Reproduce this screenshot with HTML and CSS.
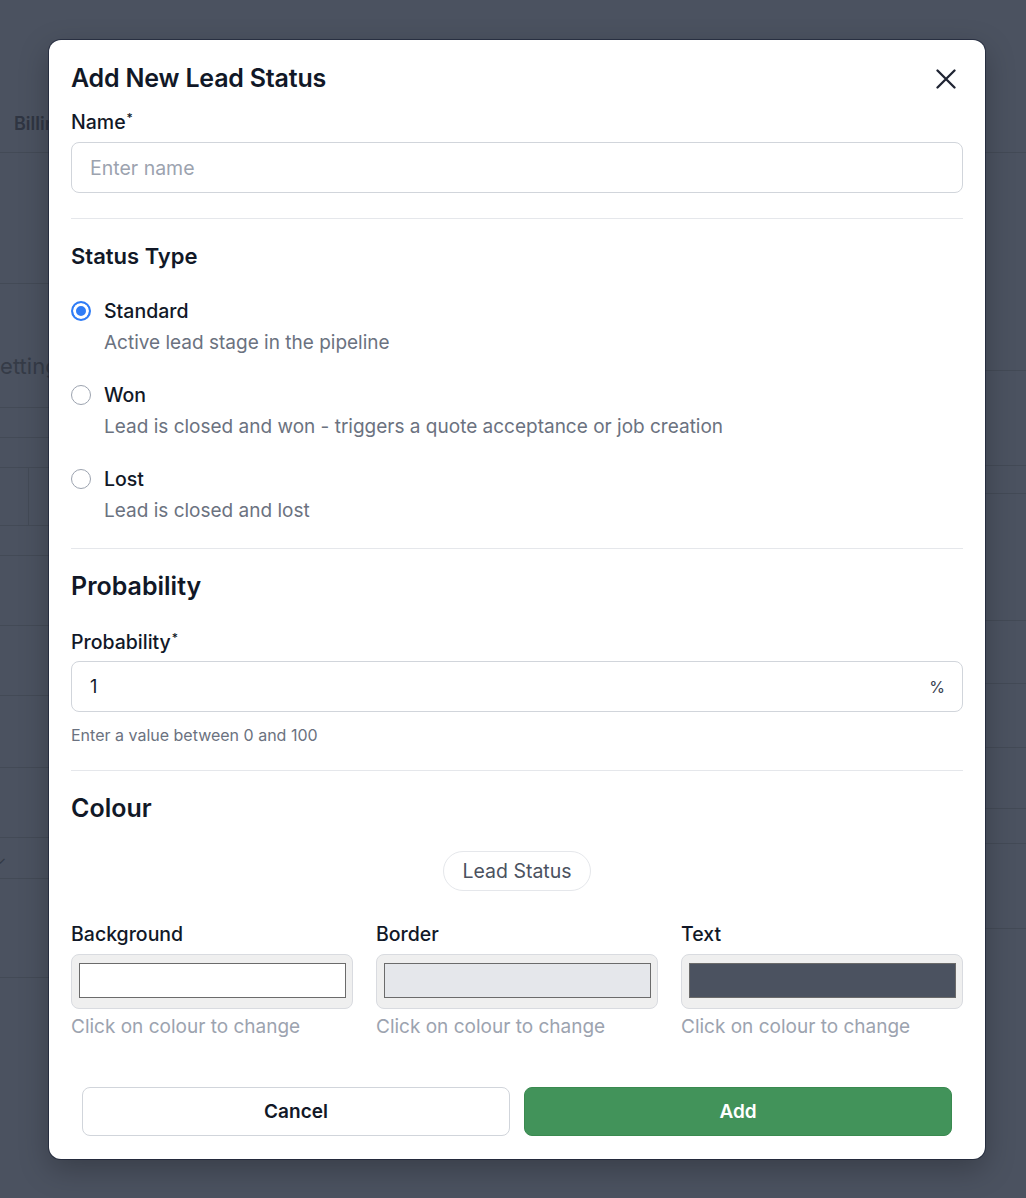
FILE: index.html
```html
<!DOCTYPE html>
<html lang="en">
<head>
  <meta charset="UTF-8">
  <meta name="viewport" content="width=device-width, initial-scale=1.0">
  <title>Lead Statuses - Settings</title>
  <link rel="stylesheet" href="styles.css">
</head>
<body>
  <!-- page behind the modal, dimmed -->
  <div class="backdrop">
    <div class="page-left">
      <div class="row tabs"><span class="tab">Billing</span></div>
      <div class="row h131"></div>
      <div class="row h124 title-row"><span class="page-title">Settings</span></div>
      <div class="row h30"></div>
      <div class="row h30"></div>
      <div class="row h58 cell-row"><span class="cell"></span></div>
      <div class="row h30"></div>
      <div class="row h70"></div>
      <div class="row h70"></div>
      <div class="row h72"></div>
      <div class="row h70"></div>
      <div class="row h41 chevron-row"><span class="chevron">&#8964;</span></div>
      <div class="row h99"></div>
    </div>
    <div class="page-right">
      <div class="row tabs"></div>
      <div class="row h218"></div>
      <div class="row h95"></div>
      <div class="row h28"></div>
      <div class="row h127"></div>
      <div class="row h63"></div>
      <div class="row h64"></div>
      <div class="row h61"></div>
      <div class="row h35"></div>
      <div class="row h85"></div>
    </div>
  </div>

  <div class="modal">
    <div class="modal-header">
      <h1>Add New Lead Status</h1>
      <button class="close-btn" aria-label="Close">
        <svg width="20" height="20" viewBox="0 0 20 20" fill="none" stroke="#1f2433" stroke-width="2.3" stroke-linecap="round">
          <path d="M1.5 1.5 L18.5 18.5 M18.5 1.5 L1.5 18.5"/>
        </svg>
      </button>
    </div>

    <label class="field-label name-label" for="name">Name<sup>*</sup></label>
    <input id="name" class="text-input" type="text" placeholder="Enter name">

    <hr class="divider">

    <h3 class="sub-title">Status Type</h3>
    <div class="options">
      <label class="option">
        <input type="radio" name="type" checked>
        <span class="option-text">
          <span class="option-name">Standard</span>
          <span class="option-desc">Active lead stage in the pipeline</span>
        </span>
      </label>
      <label class="option">
        <input type="radio" name="type">
        <span class="option-text">
          <span class="option-name">Won</span>
          <span class="option-desc">Lead is closed and won - triggers a quote acceptance or job creation</span>
        </span>
      </label>
      <label class="option">
        <input type="radio" name="type">
        <span class="option-text">
          <span class="option-name">Lost</span>
          <span class="option-desc">Lead is closed and lost</span>
        </span>
      </label>
    </div>

    <hr class="divider">

    <h2 class="section-title">Probability</h2>
    <label class="field-label prob-label" for="prob">Probability<sup>*</sup></label>
    <div class="input-suffix">
      <input id="prob" type="text" value="1">
      <span class="suffix">%</span>
    </div>
    <p class="hint">Enter a value between 0 and 100</p>

    <hr class="divider">

    <h2 class="section-title">Colour</h2>
    <div class="preview">
      <span class="chip">Lead Status</span>
    </div>
    <div class="colours">
      <div class="colour">
        <span class="colour-label">Background</span>
        <div class="swatch"><span class="swatch-fill fill-bg"></span></div>
        <span class="colour-hint">Click on colour to change</span>
      </div>
      <div class="colour">
        <span class="colour-label">Border</span>
        <div class="swatch"><span class="swatch-fill fill-border"></span></div>
        <span class="colour-hint">Click on colour to change</span>
      </div>
      <div class="colour">
        <span class="colour-label">Text</span>
        <div class="swatch"><span class="swatch-fill fill-text"></span></div>
        <span class="colour-hint">Click on colour to change</span>
      </div>
    </div>

    <div class="actions">
      <button class="btn btn-cancel">Cancel</button>
      <button class="btn btn-add">Add</button>
    </div>
  </div>
</body>
</html>
```

FILE: styles.css
```css
body {
  margin: 0;
  padding: 0;
  background-color: #4b5260;
  font-family: Inter, "Noto Sans", sans-serif;
  color: #111827;
  height: 1198px;
  overflow: hidden;
}

/* dimmed page */
.backdrop {
  display: flex;
  justify-content: space-between;
}
.page-left {
  width: 49px;
  display: flex;
  flex-direction: column;
}
.page-right {
  width: 41px;
  display: flex;
  flex-direction: column;
}
.row {
  border-bottom: 1px solid #434a56;
  box-sizing: border-box;
}
.tabs {
  height: 153px;
  display: flex;
  align-items: flex-end;
  padding: 0 0 18px 14px;
}
.tab {
  font-size: 18px;
  font-weight: 600;
  color: #2f3542;
  white-space: nowrap;
}
.h28 { height: 28px; }
.h30 { height: 30px; }
.h35 { height: 35px; }
.h41 { height: 41px; }
.h58 { height: 58px; }
.h61 { height: 61px; }
.h63 { height: 63px; }
.h64 { height: 64px; }
.h70 { height: 70px; }
.h72 { height: 72px; }
.h85 { height: 85px; }
.h95 { height: 95px; }
.h99 { height: 99px; }
.h124 { height: 124px; }
.h127 { height: 127px; }
.h131 { height: 131px; }
.h218 { height: 218px; }
.title-row {
  display: flex;
  align-items: flex-end;
  padding-bottom: 28px;
}
.page-title {
  font-size: 22px;
  color: #353b47;
  margin-left: -14px;
  white-space: nowrap;
}
.cell-row {
  display: flex;
}
.cell {
  width: 28px;
  border-right: 1px solid #434a56;
}
.chevron-row {
  display: flex;
  align-items: center;
}
.chevron {
  color: #333a46;
  font-size: 16px;
  margin-left: -6px;
  line-height: 1;
}

/* modal */
.modal {
  position: absolute;
  top: 40px;
  left: 49px;
  width: 936px;
  height: 1119px;
  box-sizing: border-box;
  background: white;
  border-radius: 12px;
  padding: 22px 22px 0 22px;
  box-shadow: 0 0 0 1px rgba(17, 24, 45, 0.55), 0 10px 30px rgba(0, 0, 0, 0.25);
  display: flex;
  flex-direction: column;
}
.modal-header {
  display: flex;
  justify-content: space-between;
  align-items: center;
  height: 32px;
}
.modal-header h1 {
  margin: 0;
  font-size: 25px;
  font-weight: 600;
  letter-spacing: -0.2px;
  color: #111827;
}
.close-btn {
  background: none;
  border: none;
  padding: 0;
  margin-right: 7px;
  margin-top: 2px;
  display: flex;
  cursor: pointer;
}

.field-label {
  font-size: 19.5px;
  font-weight: 500;
  line-height: 24px;
}
.name-label {
  margin-top: 16px;
}
.field-label sup {
  font-size: 12px;
  vertical-align: top;
  line-height: 1;
  position: relative;
  top: 2px;
  margin-left: 1px;
}
.text-input, .input-suffix {
  height: 51px;
  box-sizing: border-box;
  border: 1px solid #d1d5db;
  border-radius: 8px;
  padding: 0 18px;
  font-family: inherit;
  font-size: 19.5px;
  color: #111827;
}
.text-input {
  margin-top: 8px;
}
.text-input::placeholder {
  color: #9ca3af;
}
.input-suffix {
  margin-top: 7px;
  display: flex;
  align-items: center;
}
.input-suffix input {
  flex: 1;
  border: none;
  outline: none;
  font-family: inherit;
  font-size: 18px;
  padding: 0;
  color: #111827;
}
.suffix {
  font-size: 16px;
  color: #374151;
  margin-right: -1px;
}

.divider {
  border: none;
  border-top: 1px solid #e5e7eb;
  margin: 24px 0 0 0;
  width: 100%;
}
.text-input + .divider {
  margin-top: 25px;
}
.hint + .divider {
  margin-top: 25px;
}

.sub-title {
  margin: 23px 0 0 0;
  font-size: 22px;
  font-weight: 600;
  line-height: 28px;
}
.options {
  display: flex;
  flex-direction: column;
  gap: 26px;
  margin-top: 28px;
}
.option {
  display: flex;
  gap: 13px;
  align-items: flex-start;
}
.option input {
  appearance: none;
  flex: none;
  width: 20px;
  height: 20px;
  margin: 3px 0 0 0;
  box-sizing: border-box;
  border: 1.5px solid #9ca3af;
  border-radius: 50%;
  background: white;
}
.option input:checked {
  border: 2px solid #2f7cf6;
  background: #2f7cf6;
  box-shadow: inset 0 0 0 3px white;
}
.option-text {
  display: flex;
  flex-direction: column;
  gap: 6px;
}
.option-name {
  font-size: 19.5px;
  line-height: 26px;
  font-weight: 450;
}
.option-desc {
  font-size: 19px;
  line-height: 26px;
  color: #6b7280;
}

.section-title {
  margin: 21px 0 0 0;
  font-size: 25px;
  font-weight: 600;
  line-height: 32px;
}
.prob-label {
  margin-top: 28px;
}
.hint {
  margin: 13px 0 0 0;
  font-size: 16px;
  color: #6b7280;
  line-height: 20px;
}

.preview {
  display: flex;
  justify-content: center;
  margin-top: 27px;
}
.chip {
  display: inline-block;
  padding: 0 18px;
  height: 40px;
  line-height: 38px;
  box-sizing: border-box;
  border: 1px solid #e5e7eb;
  border-radius: 20px;
  font-size: 19.5px;
  color: #4b5260;
}

.colours {
  display: grid;
  grid-template-columns: repeat(3, 1fr);
  gap: 23px;
  margin-top: 31px;
}
.colour {
  display: flex;
  flex-direction: column;
}
.colour-label {
  font-size: 19.5px;
  font-weight: 500;
  line-height: 24px;
}
.swatch {
  margin-top: 8px;
  height: 55px;
  box-sizing: border-box;
  background: #efefef;
  border: 1px solid #d9dbe0;
  border-radius: 8px;
  padding: 8px 6px 10px 7px;
  display: flex;
}
.swatch-fill {
  flex: 1;
  border: 1px solid #6b6b6b;
}
.fill-bg { background: #ffffff; }
.fill-border { background: #e5e7eb; }
.fill-text { background: #4b5260; }
.colour-hint {
  margin-top: 6px;
  font-size: 19px;
  color: #9ca3af;
  line-height: 24px;
}

.actions {
  display: grid;
  grid-template-columns: 1fr 1fr;
  gap: 14px;
  padding: 0 11px;
  margin-top: 48px;
}
.btn {
  height: 49px;
  border-radius: 8px;
  font-family: inherit;
  font-size: 19px;
  font-weight: 600;
  cursor: pointer;
}
.btn-cancel {
  background: white;
  border: 1px solid #d1d5db;
  color: #111827;
}
.btn-add {
  background: #42935a;
  border: 1px solid #3a8a50;
  color: white;
}
```
